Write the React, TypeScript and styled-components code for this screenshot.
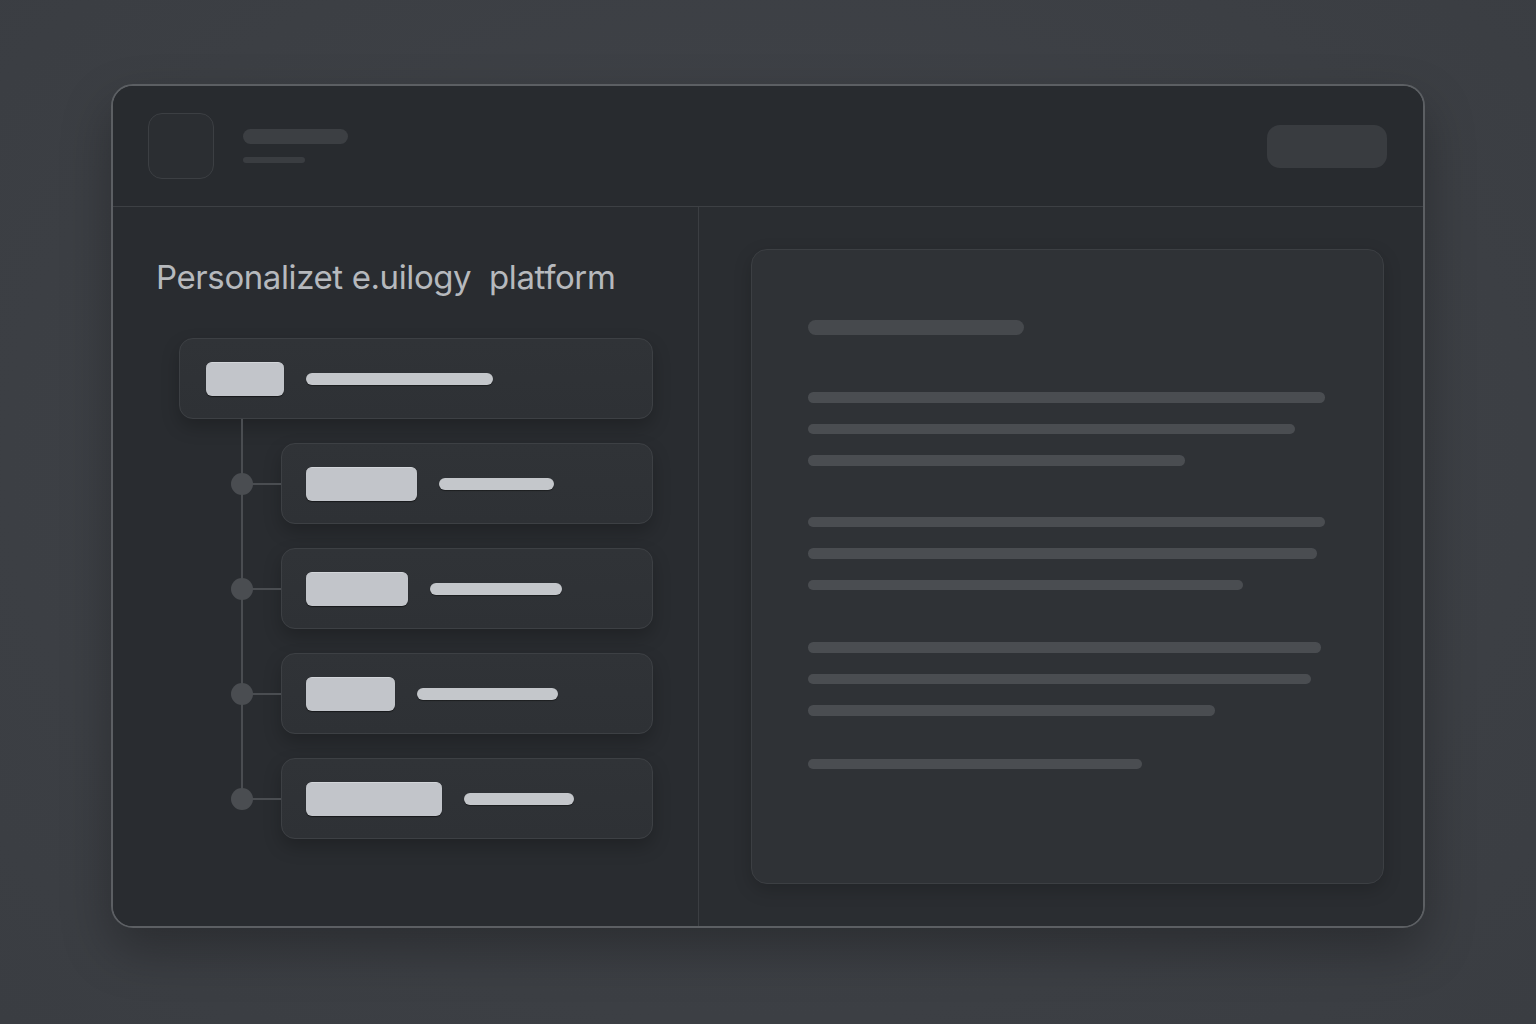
import React from 'react';
import styled, { createGlobalStyle } from 'styled-components';

const GlobalStyle = createGlobalStyle`
  * { box-sizing: border-box; }
  html, body {
    margin: 0;
    padding: 0;
    background: #3d4045;
    font-family: Inter, "Noto Sans", sans-serif;
  }
`;

const Page = styled.div`
  width: 1536px;
  height: 1024px;
  padding: 84px 0 0 111px;
  display: flex;
  align-items: flex-start;
  background: radial-gradient(ellipse at 50% 45%, #41444a 0%, #3c3f44 70%, #3a3d42 100%);
`;

const Window = styled.div`
  width: 1314px;
  height: 844px;
  border: 2px solid #5c5f63;
  border-radius: 22px;
  background: #292c30;
  box-shadow: 0 22px 50px rgba(0, 0, 0, 0.28);
  display: flex;
  flex-direction: column;
  overflow: hidden;
`;

const Header = styled.header`
  height: 121px;
  flex: none;
  display: flex;
  align-items: center;
  padding: 0 36px 0 35px;
  border-bottom: 1px solid #3d4044;
  background: #282b2f;
`;

const Logo = styled.div`
  width: 66px;
  height: 66px;
  border-radius: 14px;
  border: 1.5px solid #3c3f43;
  background: #2b2e32;
`;

const Brand = styled.div`
  display: flex;
  flex-direction: column;
  gap: 13px;
  margin-left: 29px;
`;

const Bar = styled.div<{ $w: number; $h: number; $c: string }>`
  width: ${(p) => p.$w}px;
  height: ${(p) => p.$h}px;
  border-radius: ${(p) => p.$h / 2}px;
  background: ${(p) => p.$c};
  flex: none;
`;

const HeaderButton = styled.div`
  margin-left: auto;
  width: 120px;
  height: 43px;
  border-radius: 13px;
  background: #393c40;
`;

const Body = styled.div`
  flex: 1;
  display: flex;
  min-height: 0;
`;

const LeftColumn = styled.section`
  width: 586px;
  flex: none;
  border-right: 1px solid #3b3e42;
  padding: 50px 45px 0 43px;
  background: #292c30;
`;

const Title = styled.h1`
  margin: 0;
  font-family: Inter, "Noto Sans", sans-serif;
  font-weight: 400;
  font-size: 33px;
  line-height: 40px;
  letter-spacing: -0.4px;
  color: #b6b9bd;
  white-space: pre;
`;

const Tree = styled.div`
  margin: 41px 0 0 23px;
  display: flex;
  flex-direction: column;
  gap: 24px;
`;

const Children = styled.div`
  position: relative;
  display: flex;
  flex-direction: column;
  gap: 24px;
  padding-left: 102px;

  &::before {
    content: '';
    position: absolute;
    left: 62px;
    top: -24px;
    bottom: 40px;
    width: 2px;
    background: #4a4d51;
  }
`;

const Card = styled.div<{ $pad: number }>`
  position: relative;
  height: 81px;
  border-radius: 14px;
  border: 1.5px solid #3d4044;
  background: linear-gradient(180deg, #303337 0%, #2e3135 100%);
  box-shadow: 0 8px 18px rgba(0, 0, 0, 0.22);
  display: flex;
  align-items: center;
  gap: 22px;
  padding-left: ${(p) => p.$pad}px;
`;

const Node = styled.span`
  position: absolute;
  left: -51px;
  top: 50%;
  width: 22px;
  height: 22px;
  margin-top: -11px;
  border-radius: 50%;
  background: #4a4d51;

  &::after {
    content: '';
    position: absolute;
    left: 20px;
    top: 10px;
    width: 30px;
    height: 2px;
    background: #4a4d51;
  }
`;

const Chip = styled.div<{ $w: number }>`
  width: ${(p) => p.$w}px;
  height: 34px;
  border-radius: 6px;
  background: #c2c5ca;
  border-top: 1px solid #d2d5d9;
  box-shadow: 0 1px 1px rgba(0, 0, 0, 0.5);
`;

const Pill = styled.div<{ $w: number }>`
  width: ${(p) => p.$w}px;
  height: 12px;
  border-radius: 6px;
  background: #c4c7cb;
  box-shadow: 0 1px 1px rgba(0, 0, 0, 0.4);
`;

const RightColumn = styled.section`
  flex: 1;
  padding: 42px 39px 42px 52px;
  display: flex;
  background: #2a2d31;
`;

const Document = styled.div`
  flex: 1;
  border-radius: 16px;
  border: 1.5px solid #3c3f43;
  background: #2f3236;
  box-shadow: 0 6px 18px rgba(0, 0, 0, 0.18);
  padding: 70px 0 0 56px;
  display: flex;
  flex-direction: column;
`;

const Paragraph = styled.div<{ $top: number }>`
  display: flex;
  flex-direction: column;
  gap: 21px;
  margin-top: ${(p) => p.$top}px;
`;

const children = [
  { chip: 111, pill: 115 },
  { chip: 102, pill: 132 },
  { chip: 89, pill: 141 },
  { chip: 136, pill: 110 },
];

const paragraphs = [
  { top: 57, lines: [517, 487, 377] },
  { top: 51, lines: [517, 509, 435] },
  { top: 52, lines: [513, 503, 407] },
  { top: 43, lines: [334] },
];

const App: React.FC = () => {
  return (
    <>
      <GlobalStyle />
      <Page>
        <Window>
          <Header>
            <Logo />
            <Brand>
              <Bar $w={105} $h={15} $c="#3c3f43" />
              <Bar $w={62} $h={6} $c="#3a3d41" />
            </Brand>
            <HeaderButton />
          </Header>
          <Body>
            <LeftColumn>
              <Title>{'Personalizet e.uilogy  platform'}</Title>
              <Tree>
                <Card $pad={26}>
                  <Chip $w={78} />
                  <Pill $w={187} />
                </Card>
                <Children>
                  {children.map((c, i) => (
                    <Card key={i} $pad={24}>
                      <Node />
                      <Chip $w={c.chip} />
                      <Pill $w={c.pill} />
                    </Card>
                  ))}
                </Children>
              </Tree>
            </LeftColumn>
            <RightColumn>
              <Document>
                <Bar $w={216} $h={15} $c="#46494d" />
                {paragraphs.map((p, i) => (
                  <Paragraph key={i} $top={p.top}>
                    {p.lines.map((w, j) => (
                      <Bar key={j} $w={w} $h={10.5} $c="#4a4d51" />
                    ))}
                  </Paragraph>
                ))}
              </Document>
            </RightColumn>
          </Body>
        </Window>
      </Page>
    </>
  );
};

export default App;
